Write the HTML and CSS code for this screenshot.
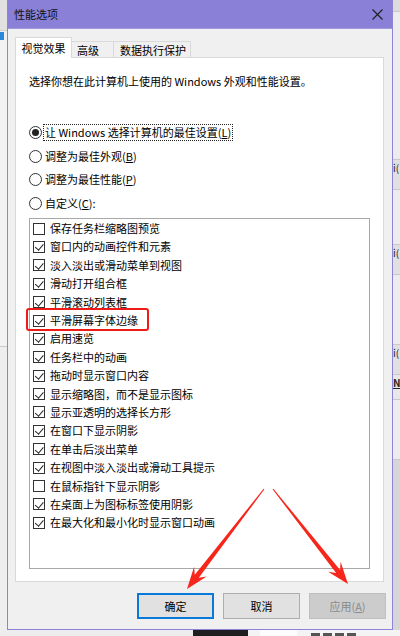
FILE: index.html
```html
<!DOCTYPE html>
<html lang="zh-CN">
<head>
<meta charset="utf-8">
<title>性能选项</title>
<link rel="stylesheet" href="styles.css">
</head>
<body>
<div class="screen">
  <div class="main">
    <div class="side-left">
      <div class="sl-top"></div>
      <div class="sl-sel"></div>
      <div class="sl-mid"></div>
      <div class="sl-bot"></div>
    </div>
    <div class="dialog">
      <div class="titlebar">
        <span class="title">性能选项</span>
        <svg class="close" width="11" height="11" viewBox="0 0 11 11"><path d="M0.5 0.5 L10.5 10.5 M10.5 0.5 L0.5 10.5" stroke="#1f1f1f" stroke-width="1.1" fill="none"/></svg>
      </div>
      <div class="body">
        <div class="tabs">
          <div class="tab tab-1 active">视觉效果</div>
          <div class="tab tab-2">高级</div>
          <div class="tab tab-3">数据执行保护</div>
        </div>
        <div class="panel">
          <p class="intro">选择你想在此计算机上使用的 Windows 外观和性能设置。</p>
          <div class="radios">
            <div class="radio-row"><span class="radio checked"></span><span class="label focus">让 Windows 选择计算机的最佳设置(<u>L</u>)</span></div>
            <div class="radio-row"><span class="radio"></span><span class="label">调整为最佳外观(<u>B</u>)</span></div>
            <div class="radio-row"><span class="radio"></span><span class="label">调整为最佳性能(<u>P</u>)</span></div>
            <div class="radio-row"><span class="radio"></span><span class="label">自定义(<u>C</u>):</span></div>
          </div>
          <div class="list">
            <div class="item"><span class="cb"></span>保存任务栏缩略图预览</div>
            <div class="item"><span class="cb on"></span>窗口内的动画控件和元素</div>
            <div class="item"><span class="cb on"></span>淡入淡出或滑动菜单到视图</div>
            <div class="item"><span class="cb on"></span>滑动打开组合框</div>
            <div class="item"><span class="cb on"></span>平滑滚动列表框</div>
            <div class="item"><span class="cb on"></span>平滑屏幕字体边缘</div>
            <div class="item"><span class="cb on"></span>启用速览</div>
            <div class="item"><span class="cb on"></span>任务栏中的动画</div>
            <div class="item"><span class="cb on"></span>拖动时显示窗口内容</div>
            <div class="item"><span class="cb on"></span>显示缩略图，而不是显示图标</div>
            <div class="item"><span class="cb on"></span>显示亚透明的选择长方形</div>
            <div class="item"><span class="cb on"></span>在窗口下显示阴影</div>
            <div class="item"><span class="cb on"></span>在单击后淡出菜单</div>
            <div class="item"><span class="cb on"></span>在视图中淡入淡出或滑动工具提示</div>
            <div class="item"><span class="cb"></span>在鼠标指针下显示阴影</div>
            <div class="item"><span class="cb on"></span>在桌面上为图标标签使用阴影</div>
            <div class="item"><span class="cb on"></span>在最大化和最小化时显示窗口动画</div>
          </div>
        </div>
        <div class="buttons">
          <button class="btn default">确定</button>
          <button class="btn">取消</button>
          <button class="btn disabled">应用(<u>A</u>)</button>
        </div>
      </div>
    </div>
    <div class="side-right">
      <div class="sr-row r1"></div>
      <div class="sr-row r2"></div>
      <div class="sr-row r3"><span>i(</span></div>
      <div class="sr-row r4"></div>
      <div class="sr-row r3"><span>i(</span></div>
      <div class="sr-row r4b"></div>
      <div class="sr-row r3"><span>i(</span></div>
      <div class="sr-row r5"><span class="n">N</span></div>
      <div class="sr-row r6"></div>
      <div class="sr-row r7"></div>
    </div>
  </div>
  <div class="bottom-strip">
    <div class="bs-left"></div>
    <div class="bs-dark"></div>
    <div class="bs-right">
      <span class="bs-box"></span>
      <span class="bs-marks"><i></i><i></i><i></i><i></i></span>
    </div>
  </div>
  <svg class="annot" width="400" height="636" viewBox="0 0 400 636">
    <rect x="27" y="309" width="121" height="21" rx="2" fill="none" stroke="#ee1b17" stroke-width="2"/>
    <polygon fill="#f7261b" points="264.4,489.3 198.8,577.8 206.7,576.5 187,589 194.1,566.7 194.8,574.8 263.6,488.7"/>
    <polygon fill="#f7261b" points="273.4,488.7 340.1,569.9 340.6,561.8 348,584 328.1,571.7 336.1,573.0 272.6,489.3"/>
  </svg>
</div>
</body>
</html>
```

FILE: styles.css
```css
* { box-sizing: border-box; }
html, body { margin: 0; padding: 0; }
body { background: #f0f0f0; }

.screen {
  width: 400px;
  height: 636px;
  position: relative;
  overflow: hidden;
  display: flex;
  flex-direction: column;
  font-family: "Noto Sans CJK SC", "Noto Sans", sans-serif;
  font-size: 11px;
  color: #000;
}

.main { display: flex; height: 630px; }

/* left strip behind dialog */
.side-left { width: 7px; display: flex; flex-direction: column; background: #f0f0f0; }
.sl-top { height: 31px; background: #e1e1e1; border-bottom: 1px solid #cfcfcf; }
.sl-sel { height: 8px; width: 4px; background: #2b87d8; margin-top: 1px; }
.sl-mid { height: 307px; background: #f2f2f2; border-bottom: 1px solid #c8c8c8; }
.sl-bot { flex: 1; background: #eeeeee; }

/* dialog */
.dialog {
  width: 386px;
  border: 1px solid #8c82d8;
  border-top: none;
  background: #f0f0f0;
  display: flex;
  flex-direction: column;
}
.titlebar {
  height: 29px;
  background: #8a80d7;
  border-bottom: 1px solid #a29ae0;
  display: flex;
  align-items: center;
  justify-content: space-between;
  padding: 0 9px 0 6px;
}
.title { font-size: 11px; line-height: 14px; color: #111; }
.close { display: block; }

.body {
  flex: 1;
  display: flex;
  flex-direction: column;
  padding: 8px 8px 10px 7px;
}

.tabs { display: flex; align-items: flex-end; height: 21px; }
.tab {
  height: 17px;
  line-height: 16px;
  border: 1px solid #d9d9d9;
  border-bottom: none;
  background: #f0f0f0;
  padding-left: 5px;
  white-space: nowrap;
}
.tab-1 { width: 57px; text-align: center; padding-left: 0; }
.tab-2 { width: 42px; border-left: none; }
.tab-3 { width: 77px; border-left: none; padding-left: 6px; }
.tab.active {
  height: 21px;
  line-height: 20px;
  background: #fff;
  position: relative;
  z-index: 1;
}

.panel {
  flex: 1;
  margin-top: -1px;
  background: #fff;
  border: 1px solid #d9d9d9;
  padding: 15px 13px 0 13px;
}
.intro { margin: 0; line-height: 16px; }

.radios { margin-top: 32px; }
.radio-row { display: flex; align-items: center; height: 23.6px; }
.radio {
  width: 13px;
  height: 13px;
  border: 1px solid #333;
  border-radius: 50%;
  background: #fff;
  display: flex;
  align-items: center;
  justify-content: center;
  flex: none;
}
.radio.checked::after {
  content: "";
  width: 7px;
  height: 7px;
  border-radius: 50%;
  background: #222;
}
.label { margin-left: 1px; line-height: 15px; padding: 0 1px; border: 1px solid transparent; }
.label.focus { border: 1px dotted #222; }

.list {
  margin-top: 3px;
  height: 351px;
  border: 1px solid #a8a8a8;
  padding: 0 0 0 3px;
}
.item { display: flex; align-items: center; height: 18.4px; line-height: 15px; white-space: nowrap; }
.cb {
  width: 12px;
  height: 12px;
  border: 1px solid #333;
  background: #fff;
  margin-right: 5px;
  flex: none;
  position: relative;
}
.cb.on::after {
  content: "";
  position: absolute;
  left: 2.5px;
  top: 0.5px;
  width: 3.5px;
  height: 6.5px;
  border-right: 1.2px solid #222;
  border-bottom: 1.2px solid #222;
  transform: rotate(40deg);
}

.buttons {
  display: flex;
  justify-content: flex-end;
  gap: 9px;
  margin-top: 11px;
  margin-right: -2px;
}
.btn {
  width: 77px;
  height: 26px;
  font-family: inherit;
  font-size: 11px;
  color: #000;
  background: #e1e1e1;
  border: 1px solid #adadad;
  padding: 0;
  margin: 0;
}
.btn.default { border: 2px solid #0a78d6; }
.btn.disabled { background: #cccccc; border-color: #bfbfbf; color: #8a8a8a; }

/* right strip behind dialog */
.side-right { width: 7px; background: #e4e4e4; display: flex; flex-direction: column; overflow: hidden; }
.sr-row { border-bottom: 1px solid #c9c9c9; font-size: 10px; line-height: 12px; color: #222; white-space: nowrap; flex: none; }
.sr-row span { display: block; padding-top: 2px; }
.r1 { height: 12px; background: #dcdcdc; }
.r2 { height: 148px; background: #ececec; }
.r3 { height: 30px; background: #e0e0e0; }
.r4 { height: 55px; background: #ececec; }
.r4b { height: 70px; background: #ececec; }
.r5 { height: 25px; background: #e8e8e8; }
.r5 .n { text-decoration: underline; font-weight: bold; }
.r6 { height: 60px; background: #ececec; }
.r7 { flex: 1; background: #d6d6d6; border-bottom: none; }

.bottom-strip { height: 6px; display: flex; }
.bs-left { width: 193px; background: #ededed; }
.bs-dark { width: 55px; background: #1e1e1e; }
.bs-right { flex: 1; background: #f4f4f4; display: flex; align-items: flex-start; overflow: hidden; }
.bs-box { width: 37px; height: 6px; background: #fdfdfd; margin-left: 12px; }
.bs-marks { display: flex; gap: 3px; margin-left: 14px; padding-top: 3px; }
.bs-marks i { display: block; width: 9px; height: 3px; background: #555; }

.annot { position: absolute; left: 0; top: 0; pointer-events: none; }
```
